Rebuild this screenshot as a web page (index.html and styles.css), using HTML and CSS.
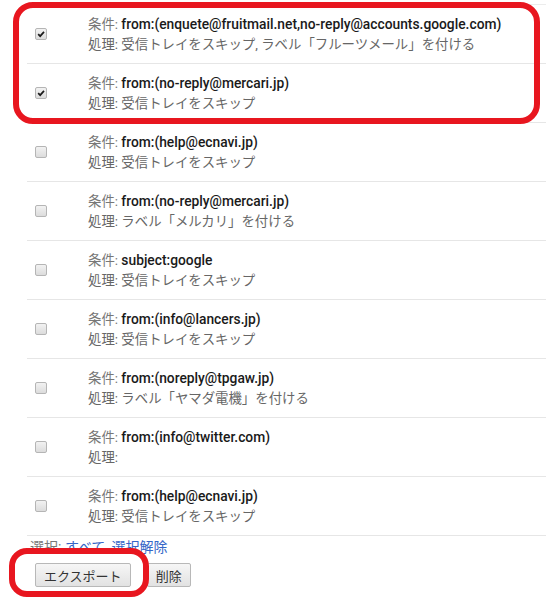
FILE: index.html
```html
<!DOCTYPE html>
<html lang="ja">
<head>
<meta charset="utf-8">
<link rel="stylesheet" href="styles.css">
</head>
<body>
<div class="page">
  <ul class="filters">
    <li class="row"><span class="cb checked"><svg viewBox="0 0 12 12"><path d="M2.6 6.2 L5 8.6 L9.6 3.4" /></svg></span><div class="desc"><div><span class="lbl">条件: </span><span class="q">from:(enquete@fruitmail.net,no-reply@accounts.google.com)</span></div><div class="act">処理: 受信トレイをスキップ, ラベル「フルーツメール」を付ける</div></div></li>
    <li class="row"><span class="cb checked"><svg viewBox="0 0 12 12"><path d="M2.6 6.2 L5 8.6 L9.6 3.4" /></svg></span><div class="desc"><div><span class="lbl">条件: </span><span class="q">from:(no-reply@mercari.jp)</span></div><div class="act">処理: 受信トレイをスキップ</div></div></li>
    <li class="row"><span class="cb"></span><div class="desc"><div><span class="lbl">条件: </span><span class="q">from:(help@ecnavi.jp)</span></div><div class="act">処理: 受信トレイをスキップ</div></div></li>
    <li class="row"><span class="cb"></span><div class="desc"><div><span class="lbl">条件: </span><span class="q">from:(no-reply@mercari.jp)</span></div><div class="act">処理: ラベル「メルカリ」を付ける</div></div></li>
    <li class="row"><span class="cb"></span><div class="desc"><div><span class="lbl">条件: </span><span class="q">subject:google</span></div><div class="act">処理: 受信トレイをスキップ</div></div></li>
    <li class="row"><span class="cb"></span><div class="desc"><div><span class="lbl">条件: </span><span class="q">from:(info@lancers.jp)</span></div><div class="act">処理: 受信トレイをスキップ</div></div></li>
    <li class="row"><span class="cb"></span><div class="desc"><div><span class="lbl">条件: </span><span class="q">from:(noreply@tpgaw.jp)</span></div><div class="act">処理: ラベル「ヤマダ電機」を付ける</div></div></li>
    <li class="row"><span class="cb"></span><div class="desc"><div><span class="lbl">条件: </span><span class="q">from:(info@twitter.com)</span></div><div class="act">処理:</div></div></li>
    <li class="row"><span class="cb"></span><div class="desc"><div><span class="lbl">条件: </span><span class="q">from:(help@ecnavi.jp)</span></div><div class="act">処理: 受信トレイをスキップ</div></div></li>
  </ul>
  <div class="select">選択: <a href="#">すべて</a>, <a href="#">選択解除</a></div>
  <div class="buttons">
    <button class="btn">エクスポート</button>
    <button class="btn">削除</button>
  </div>
  <div class="mark mark-top"></div>
  <div class="mark mark-bottom"></div>
</div>
</body>
</html>
```

FILE: styles.css
```css
html, body {
  margin: 0;
  padding: 0;
  background: #fff;
}
.page {
  position: relative;
  width: 546px;
  height: 600px;
  overflow: hidden;
  font-family: Roboto, "Liberation Sans", "Noto Sans CJK JP", sans-serif;
  font-size: 14px;
  color: #666;
}
.filters {
  list-style: none;
  margin: 4px 0 0 27px;
  padding: 0;
  border-top: 1px solid #ececec;
}
.row {
  display: flex;
  align-items: center;
  height: 58px;
  border-bottom: 1px solid #e6e6e6;
  padding-left: 8px;
}
.cb {
  width: 10px;
  height: 10px;
  border: 1px solid #b5b5b5;
  border-radius: 2px;
  background: linear-gradient(#f2f2f2, #dcdcdc);
  flex: none;
  display: flex;
}
.cb svg {
  width: 10px;
  height: 10px;
}
.cb svg path {
  fill: none;
  stroke: #1a1a1a;
  stroke-width: 2;
}
.desc {
  margin-left: 41px;
  font-size: 13.4px;
  line-height: 20px;
  padding-top: 1px;
  white-space: nowrap;
}
.lbl {
  color: #777;
}
.q {
  color: #1a1a1a;
  font-weight: 500;
  font-size: 13.8px;
}
.act {
  color: #666;
}
.select {
  margin: 2px 0 0 30px;
  line-height: 18px;
  color: #777;
}
.select a {
  color: #3566c8;
  text-decoration: none;
}
.buttons {
  display: flex;
  gap: 16px;
  margin: 7px 0 0 35px;
}
.btn {
  font-family: "Liberation Sans", Arial, "Noto Sans CJK JP", sans-serif;
  font-size: 13px;
  color: #333;
  height: 24px;
  padding: 0 8px;
  border: 1px solid #b8b8b8;
  border-radius: 2px;
  background: linear-gradient(#f6f6f6, #e2e2e2);
}
.mark {
  position: absolute;
  border: 6px solid #e8161f;
  box-sizing: border-box;
}
.mark-top {
  left: 13px;
  top: 2px;
  width: 527px;
  height: 122px;
  border-radius: 20px;
}
.mark-bottom {
  left: 9px;
  top: 548px;
  width: 140px;
  height: 49px;
  border-radius: 18px;
}
```
